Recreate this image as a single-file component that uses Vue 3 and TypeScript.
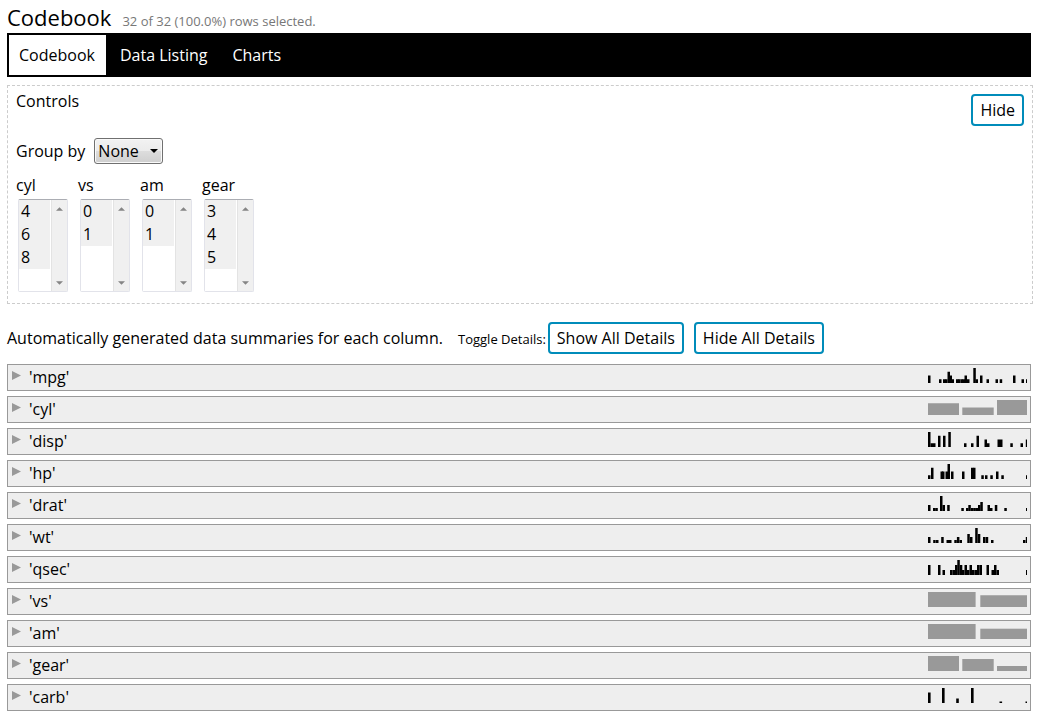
<script setup lang="ts">
import { ref } from 'vue'

// Each bar is [left, height, width] on a 100 x 15 drawing area.
type Bar = [number, number, number?]

interface Column {
  name: string
  kind: 'numeric' | 'grouped'
  bars: Bar[]
}

interface Filter {
  name: string
  values: string[]
}

const tabs = ['Codebook', 'Data Listing', 'Charts']
const activeTab = ref('Codebook')
const controlsShown = ref(true)
const groupBy = ref('None')

const filters: Filter[] = [
  { name: 'cyl', values: ['4', '6', '8'] },
  { name: 'vs', values: ['0', '1'] },
  { name: 'am', values: ['0', '1'] },
  { name: 'gear', values: ['3', '4', '5'] },
]
const selected = ref<Record<string, string[]>>(
  Object.fromEntries(filters.map((f) => [f.name, [...f.values]])),
)

const columns: Column[] = [
  { name: 'mpg', kind: 'numeric', bars: [[0, 7.5], [11, 3.75], [15, 3.75], [17, 3.75], [19.5, 11.25], [21.5, 7.5], [23.5, 3.75], [28, 3.75], [30, 3.75], [32.5, 3.75], [34.5, 3.75], [36.5, 7.5], [39, 3.75], [45.3, 15], [47.5, 3.75], [52, 7.5], [58.5, 3.75], [67.5, 3.75], [71.7, 3.75], [85, 7.5], [93.5, 3.75], [98, 3.75]] },
  { name: 'cyl', kind: 'grouped', bars: [[0, 11.75, 31], [34.3, 7.5, 31.4], [69, 15, 31]] },
  { name: 'disp', kind: 'numeric', bars: [[0, 15], [2.5, 3.75], [5, 3.75], [10, 11.25], [15, 11.25], [20.3, 15], [36, 3.75], [43, 3.75], [48.5, 11.25], [56.5, 7.5], [59, 3.75], [69.5, 7.5], [72, 7.5], [82.3, 3.75], [92.5, 3.75], [97.8, 7.5]] },
  { name: 'hp', kind: 'numeric', bars: [[0, 3.75], [3, 11.25], [12.5, 7.5], [14, 7.5], [17.5, 7.5], [19.5, 15], [23, 7.5], [34, 7.5], [43, 11.25], [45, 11.25], [53.3, 3.75], [57, 3.75], [62.3, 3.75], [68, 7.5], [73.3, 3.75], [98, 3.75]] },
  { name: 'drat', kind: 'numeric', bars: [[0, 6], [5, 3], [7.3, 3], [12, 15], [14.5, 6], [19.2, 6], [33.3, 3], [38, 3], [40.3, 6], [43, 3], [45.3, 3], [47.5, 3], [50, 6], [52.3, 9], [59.5, 6], [62, 3], [66.8, 6], [76.3, 3], [98, 3]] },
  { name: 'wt', kind: 'numeric', bars: [[0, 6], [5.2, 3], [8, 3], [13.2, 6], [18.5, 3], [21, 3], [26.3, 3], [28.9, 6], [31.5, 3], [39.3, 9], [42, 6], [47.2, 15], [49.8, 9], [55, 6], [57.7, 6], [63, 3], [95, 3], [97.8, 6]] },
  { name: 'qsec', kind: 'numeric', bars: [[0, 10], [10, 10], [14.5, 5], [22, 5], [24.5, 5], [27, 10], [29.3, 15], [31.8, 10], [34, 5], [36.5, 10], [39, 5], [41.5, 10], [44, 5], [46.5, 5], [49, 10], [51.5, 10], [58.5, 10], [63.5, 5], [66, 10], [68.5, 5], [98, 5]] },
  { name: 'vs', kind: 'grouped', bars: [[0, 15, 47.6], [52.3, 11.75, 48]] },
  { name: 'am', kind: 'grouped', bars: [[0, 15, 47.6], [52.3, 10.3, 48]] },
  { name: 'gear', kind: 'grouped', bars: [[0, 15, 31], [34.3, 12, 31.4], [69, 5, 31]] },
  { name: 'carb', kind: 'numeric', bars: [[0, 10.5, 2.6], [14, 15, 2.6], [28.2, 4.5, 2.6], [43, 15, 2.6], [71.5, 1.5, 2.6], [97.5, 1.5, 2.6]] },
]

const open = ref<Record<string, boolean>>({})

function setAll(value: boolean) {
  for (const c of columns) open.value[c.name] = value
}
</script>

<template>
  <main class="page">
    <header class="heading">
      <h1>Codebook</h1>
      <span class="count">32 of 32 (100.0%) rows selected.</span>
    </header>

    <nav class="tabs">
      <button
        v-for="tab in tabs"
        :key="tab"
        type="button"
        :class="['tab', { active: tab === activeTab }]"
        @click="activeTab = tab"
      >{{ tab }}</button>
    </nav>

    <section class="controls">
      <div class="controls-head">
        <h2>Controls</h2>
        <button type="button" class="action" @click="controlsShown = !controlsShown">
          {{ controlsShown ? 'Hide' : 'Show' }}
        </button>
      </div>
      <template v-if="controlsShown">
        <div class="group">
          <label for="group-by">Group by</label>
          <span class="dropdown">
            <select id="group-by" v-model="groupBy">
              <option>None</option>
              <option v-for="f in filters" :key="f.name">{{ f.name }}</option>
            </select>
            <svg class="caret" viewBox="0 0 8 4" aria-hidden="true"><path d="M0 0h8L4 4z" /></svg>
          </span>
        </div>
        <div class="filters">
          <div v-for="f in filters" :key="f.name" class="filter">
            <label :for="'filter-' + f.name">{{ f.name }}</label>
            <div class="listbox">
              <select :id="'filter-' + f.name" v-model="selected[f.name]" multiple size="4">
                <option v-for="v in f.values" :key="v" :value="v">{{ v }}</option>
              </select>
              <span class="track" aria-hidden="true">
                <svg viewBox="0 0 8 4"><path d="M0 4h8L4 0z" /></svg>
                <svg viewBox="0 0 8 4"><path d="M0 0h8L4 4z" /></svg>
              </span>
            </div>
          </div>
        </div>
      </template>
    </section>

    <div class="summary">
      <span class="intro">Automatically generated data summaries for each column.</span>
      <span class="toggle">Toggle Details:</span>
      <button type="button" class="action" @click="setAll(true)">Show All Details</button>
      <button type="button" class="action" @click="setAll(false)">Hide All Details</button>
    </div>

    <ul class="columns">
      <li v-for="c in columns" :key="c.name">
        <button
          type="button"
          class="row"
          :aria-expanded="!!open[c.name]"
          @click="open[c.name] = !open[c.name]"
        >
          <svg :class="['marker', { turned: open[c.name] }]" viewBox="0 0 9 9" aria-hidden="true">
            <path d="M0 0v9l9-4.5z" />
          </svg>
          <span class="name">'{{ c.name }}'</span>
          <svg :class="['chart', c.kind]" viewBox="0 0 99 15" aria-hidden="true">
            <rect
              v-for="(b, i) in c.bars"
              :key="i"
              :x="b[0]"
              :y="15 - b[1]"
              :width="b[2] ?? 2.5"
              :height="b[1]"
            />
          </svg>
        </button>
      </li>
    </ul>
  </main>
</template>

<style>
body {
  margin: 0;
  background: #fff;
}
</style>

<style scoped>
.page {
  padding: 2px 7px 7px;
  font: 16px/24px "Open Sans", "Noto Sans", sans-serif;
  color: #000;
}
button,
select {
  font: inherit;
  color: inherit;
  margin: 0;
}
.heading {
  display: flex;
  align-items: baseline;
  gap: 11px;
  height: 31px;
}
h1 {
  margin: 0;
  font-size: 22px;
  font-weight: 400;
  line-height: 30px;
}
.count {
  font-size: 13px;
  color: #777;
}
.tabs {
  display: flex;
  gap: 4px;
  padding: 2px;
  background: #000;
}
.tab {
  padding: 8px 11px 8px 10px;
  border: 0;
  background: #000;
  color: #fff;
}
.tab.active {
  background: #fff;
  color: #000;
}
.controls {
  margin: 8px -2px 0 0;
  padding: 8px 8px 11px;
  border: 1px dashed #ccc;
}
.controls-head {
  display: flex;
  justify-content: space-between;
  align-items: flex-start;
}
h2 {
  margin: 0;
  font-size: 16px;
  font-weight: 400;
  line-height: 14px;
}
.action {
  height: 32px;
  padding: 0 7px;
  border: 2px solid #008cba;
  border-radius: 4px;
  background: #fff;
  line-height: 28px;
}
.group {
  display: flex;
  align-items: center;
  gap: 9px;
  margin-top: 12px;
}
.dropdown {
  position: relative;
  display: flex;
}
.dropdown select {
  appearance: none;
  width: 69px;
  height: 26px;
  padding: 0 3px;
  border: 1px solid #707070;
  border-radius: 3px;
  background: linear-gradient(#f2f2f2, #ebebeb 50%, #dddddd 50%, #cfcfcf);
  box-shadow: inset 0 0 0 1px #fafafa;
}
.caret {
  position: absolute;
  right: 5px;
  top: 11px;
  width: 8px;
  height: 4px;
  pointer-events: none;
}
.filters {
  display: flex;
  gap: 12px;
  margin-top: 9px;
}
.filter {
  width: 50px;
}
.filter label {
  display: block;
  margin-bottom: 2px;
  line-height: 24px;
}
.listbox {
  display: flex;
  box-sizing: border-box;
  width: 50px;
  height: 93px;
  margin-left: 2px;
  border: 1px solid #e2e3ea;
  border-top-color: #abadb3;
  border-radius: 2px;
}
.listbox select {
  appearance: none;
  flex: 1;
  min-width: 0;
  height: 91px;
  padding: 0;
  border: 0;
  border-radius: 0;
  background: #fff;
  overflow: hidden;
  outline: 0;
}
.listbox option {
  min-height: 0;
  height: 23px;
  padding: 0 2px;
  box-sizing: border-box;
  line-height: 23px;
  color: #000;
}
.listbox option:checked {
  background: #f0f0f0 linear-gradient(#f0f0f0, #f0f0f0);
  color: #000;
}
.track {
  display: flex;
  flex-direction: column;
  justify-content: space-between;
  align-items: center;
  box-sizing: border-box;
  width: 16px;
  margin-left: 1px;
  padding: 7px 0 6px;
  border-left: 1px solid #e3e3e3;
  background: #f0f0f0;
}
.track svg {
  width: 7px;
  height: 4px;
  fill: #858585;
}
.summary {
  display: flex;
  align-items: center;
  margin-top: 18px;
}
.intro {
  min-width: 443px;
}
.toggle {
  margin: 2px 2px 0 8px;
  font-size: 13px;
}
.summary .action + .action {
  margin-left: 10px;
}
.columns {
  display: flex;
  flex-direction: column;
  gap: 5px;
  margin: 10px 0 0;
  padding: 0;
  list-style: none;
}
.row {
  display: flex;
  align-items: flex-start;
  box-sizing: border-box;
  width: 100%;
  height: 27px;
  padding: 0 3px 0 4px;
  border: 1px solid #999;
  background: #eee;
  text-align: left;
}
.marker {
  width: 9px;
  height: 9px;
  margin-top: 6px;
  fill: #999;
}
.marker.turned {
  transform: rotate(90deg);
}
.name {
  flex: 1;
  margin-left: 8px;
  line-height: 25px;
}
.chart {
  width: 99px;
  height: 15px;
  margin-top: 3px;
}
.numeric {
  fill: #000;
}
.grouped {
  fill: #999;
}
</style>
